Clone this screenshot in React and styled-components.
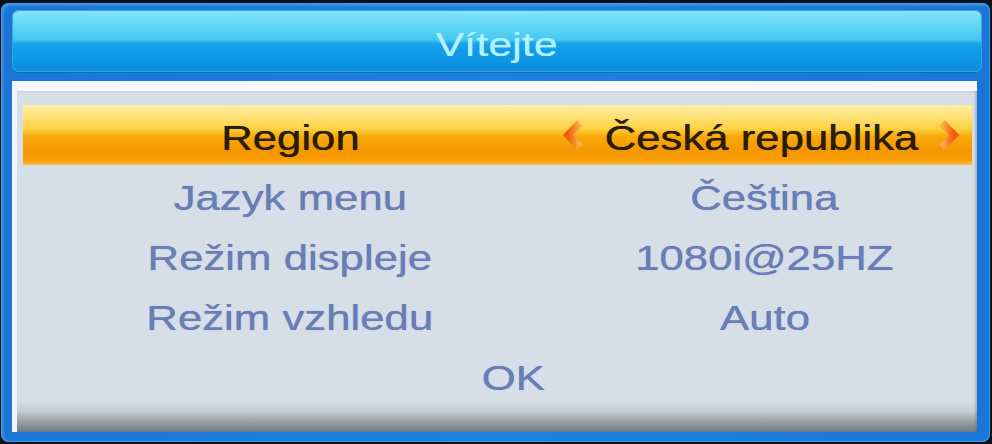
import React from "react";
import styled, { createGlobalStyle } from "styled-components";

// Welcome dialog of a set-top box: first-install settings
const GlobalStyle = createGlobalStyle`
  html, body {
    margin: 0;
    padding: 0;
    background: #08121a;
  }
  body {
    font-family: "Liberation Sans", Arial, sans-serif;
  }
`;

const rows = [
  { label: "Jazyk menu", value: "Čeština" },
  { label: "Režim displeje", value: "1080i@25HZ" },
  { label: "Režim vzhledu", value: "Auto" },
];

const Screen = styled.div`
  width: 992px;
  height: 444px;
  box-sizing: border-box;
  padding: 3px 2px 2px 1px;
  background: #08121a;
  display: flex;
`;

const Frame = styled.div`
  flex: 1;
  display: flex;
  flex-direction: column;
  border-radius: 8px;
  padding: 7px 8px 10px 11px;
  background: linear-gradient(90deg, #1a76d6 0%, #1e82e0 50%, #1a76d6 100%);
  box-shadow: inset 0 0 0 1px #3f9ae6, inset 2px 2px 3px rgba(255, 255, 255, 0.25);
`;

const TitleBar = styled.div`
  height: 62px;
  flex: none;
  display: flex;
  align-items: center;
  justify-content: center;
  border-radius: 7px;
  background: linear-gradient(
    180deg,
    #86e6fa 0%,
    #62d6f4 25%,
    #46c8f0 48%,
    #18a2ec 54%,
    #0c96e4 80%,
    #0a8cda 100%
  );
  box-shadow: inset 0 0 0 1px #35a6dc, 0 1px 0 #0c6cc0;
`;

const Stretch = styled.span`
  display: inline-block;
  white-space: nowrap;
  transform: scaleX(1.25);
  text-shadow: 0 0 0.6px currentColor;
`;

const Title = styled(Stretch)`
  font-size: 34px;
  color: #aef2ff;
  letter-spacing: 0.2px;
  margin-top: 6px;
`;

const Body = styled.div`
  flex: 1;
  margin-top: 9px;
  margin-right: 5px;
  display: flex;
  flex-direction: column;
  padding: 14px 5px 0 6px;
  border-top: 10px solid #f6f9fc;
  border-left: 5px solid #f2f6fa;
  background: linear-gradient(
    180deg,
    #d6dee7 0%,
    #d6dee7 91%,
    #c4ccd2 94%,
    #9aa09e 97%,
    #6c7a88 100%
  );
  box-shadow: inset -2px 0 2px rgba(90, 110, 130, 0.35);
`;

const Row = styled.div`
  height: 60px;
  display: grid;
  grid-template-columns: 534px 1fr;
  align-items: center;
  font-size: 35px;
  color: ${(p) => (p.$active ? "#2a1c06" : "#6a7db6")};
  background: ${(p) =>
    p.$active
      ? `linear-gradient(
          180deg,
          #fdf0a4 0%,
          #fde27a 18%,
          #fcd140 40%,
          #f8aa0c 52%,
          #f69800 75%,
          #f79c04 92%,
          #fbc04a 100%
        )`
      : "transparent"};
`;

const Cell = styled.div`
  display: flex;
  align-items: center;
  justify-content: center;
  padding-top: 5px;
`;

const ValueCell = styled(Cell)`
  justify-content: space-between;
  padding-left: 3px;
  padding-right: 10px;
`;

const OkRow = styled(Row)`
  grid-template-columns: 1fr;
  padding-left: 32px;
`;

const Arrow = ({ dir }) => (
  <svg width="26" height="30" viewBox="0 0 26 30" style={{ marginTop: -6 }}>
    <defs>
      <linearGradient id={`ag-${dir}`} x1="0" y1="0" x2="1" y2="0">
        <stop offset="0" stopColor={dir === "left" ? "#f05a0c" : "#f9b448"} />
        <stop offset="1" stopColor={dir === "left" ? "#f9b448" : "#f05a0c"} />
      </linearGradient>
    </defs>
    <path
      d={dir === "left" ? "M20 3 L8 15 L20 27" : "M6 3 L18 15 L6 27"}
      fill="none"
      stroke={`url(#ag-${dir})`}
      strokeWidth="7.5"
      strokeLinejoin="miter"
    />
  </svg>
);

export default function App() {
  return (
    <>
      <GlobalStyle />
      <Screen>
        <Frame>
          <TitleBar>
            <Title>Vítejte</Title>
          </TitleBar>
          <Body>
            <Row $active>
              <Cell>
                <Stretch>Region</Stretch>
              </Cell>
              <ValueCell>
                <Arrow dir="left" />
                <Stretch>Česká republika</Stretch>
                <Arrow dir="right" />
              </ValueCell>
            </Row>
            {rows.map((r) => (
              <Row key={r.label}>
                <Cell>
                  <Stretch>{r.label}</Stretch>
                </Cell>
                <Cell>
                  <Stretch>{r.value}</Stretch>
                </Cell>
              </Row>
            ))}
            <OkRow>
              <Cell>
                <Stretch>OK</Stretch>
              </Cell>
            </OkRow>
          </Body>
        </Frame>
      </Screen>
    </>
  );
}
